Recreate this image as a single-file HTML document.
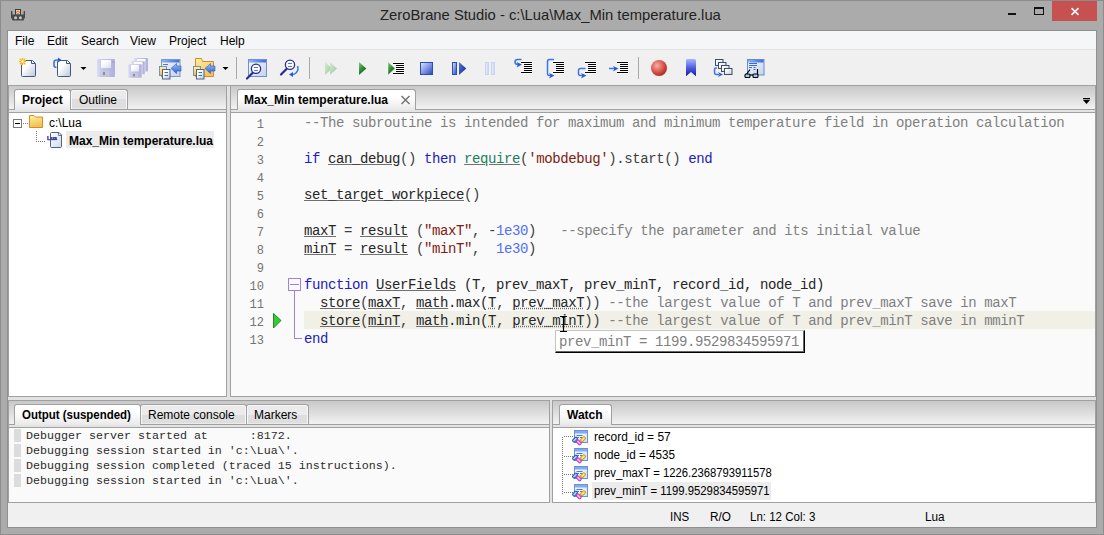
<!DOCTYPE html>
<html><head><meta charset="utf-8">
<style>
*{margin:0;padding:0;box-sizing:border-box}
html,body{width:1104px;height:535px;overflow:hidden;background:#ababab;font-family:"Liberation Sans",sans-serif;font-size:12px;color:#000}
.a{position:absolute}
.t{position:absolute;white-space:pre;line-height:1}
.mono{font-family:"Liberation Mono",monospace}

.ln{position:absolute;left:231px;width:33px;height:18px;line-height:18px;padding-top:3px;text-align:right;font-family:"Liberation Mono",monospace;font-size:12px;color:#747474;white-space:pre}
.code{position:absolute;left:304px;height:18px;line-height:18px;padding-top:1px;font-family:"Liberation Mono",monospace;font-size:14px;letter-spacing:-0.4px;white-space:pre}
.code .u{text-decoration:underline;text-decoration-color:#707070;text-underline-offset:1px}
.code .d{text-decoration:underline dotted;text-decoration-color:#707070;text-underline-offset:1px}
.out{position:absolute;left:26px;height:15px;line-height:15px;font-family:"Liberation Mono",monospace;font-size:11.667px;color:#2c2c2c;white-space:pre}
.tabA{position:absolute;height:21px;border:1px solid #a0a0a0;border-bottom:0;border-radius:3px 3px 0 0;background:linear-gradient(#fff 35%,#e9e9e9)}
.tabI{position:absolute;height:20px;border:1px solid #a0a0a0;border-bottom:0;border-radius:3px 3px 0 0;background:linear-gradient(#ebebeb 50%,#dedede 50%);box-shadow:inset 1px 1px 0 #f8f8f8,inset -1px 0 0 #f8f8f8,inset 0 -1px 0 #eaeaea}
</style></head><body>
<!-- frame lines -->
<div class="a" style="left:0;top:0;width:1104px;height:1px;background:#8c8c8c"></div>
<div class="a" style="left:0;top:0;width:1px;height:535px;background:#8c8c8c"></div>
<div class="a" style="left:1103px;top:0;width:1px;height:535px;background:#8c8c8c"></div>
<div class="a" style="left:0;top:534px;width:1104px;height:1px;background:#8c8c8c"></div>

<!-- title -->
<div class="t" id="title" style="left:380px;top:7px;font-size:15px;color:#222;transform:scaleX(0.985);transform-origin:0 0">ZeroBrane Studio - c:\Lua\Max_Min temperature.lua</div>
<!-- window buttons -->
<div class="a" style="left:1008px;top:13px;width:8px;height:2px;background:#111"></div>
<div class="a" style="left:1034px;top:7px;width:10px;height:8px;border:1px solid #111;border-top-width:2px"></div>
<div class="a" style="left:1052px;top:1px;width:45px;height:20px;background:#c75050"></div>

<svg class="a" style="left:1052px;top:1px" width="45" height="20" viewBox="1052 1 45 20">
<path d="M1071.5 8.2L1078.5 14.8M1078.5 8.2L1071.5 14.8" stroke="#fff" stroke-width="1.6"/>
</svg>
<!-- app icon -->
<svg class="a" style="left:8px;top:6px" width="20" height="17" viewBox="8 6 20 17">
<rect x="15.5" y="9.5" width="5" height="5.5" fill="#d8d8d8" stroke="#3c3c3c"/>
<circle cx="18" cy="12.2" r="1.7" fill="#e87830"/>
<rect x="17" y="11.8" width="2" height="0.9" fill="#f4d0b0"/>
<rect x="11" y="11" width="1.3" height="7" fill="#444"/>
<rect x="23.7" y="11" width="1.3" height="7" fill="#444"/>
<path d="M12 14.5H24L25 17L23.5 20.5H12.5L11 17Z" fill="#4a4a4a"/>
<circle cx="15.6" cy="17.8" r="1.5" fill="#c8c8c8"/>
<circle cx="20.4" cy="17.8" r="1.5" fill="#c8c8c8"/>
</svg>

<!-- client -->
<div class="a" style="left:7px;top:30px;width:1090px;height:498px;background:#8f8f8f"></div>
<div class="a" style="left:8px;top:31px;width:1088px;height:496px;background:#f0f0f0"></div>
<!-- menu bar -->
<div class="a" style="left:8px;top:31px;width:1088px;height:18px;background:#f5f6f7"></div>
<div class="a" style="left:8px;top:49px;width:1088px;height:1px;background:#e3e3e3"></div>
<div class="t" style="left:15px;top:35px">File</div>
<div class="t" style="left:47px;top:35px">Edit</div>
<div class="t" style="left:81px;top:35px">Search</div>
<div class="t" style="left:130px;top:35px">View</div>
<div class="t" style="left:169px;top:35px">Project</div>
<div class="t" style="left:220px;top:35px">Help</div>



<!-- TOOLBAR ICONS -->
<svg class="a" style="left:0;top:50px" width="800" height="35" viewBox="0 50 800 35">
<defs>
<linearGradient id="pg" x1="0" y1="0" x2="1" y2="1"><stop offset="0.35" stop-color="#ffffff"/><stop offset="1" stop-color="#b8c6dc"/></linearGradient>
<linearGradient id="flp" x1="0" y1="0" x2="1" y2="0"><stop offset="0" stop-color="#dcdcf8"/><stop offset="0.3" stop-color="#c4c4ee"/><stop offset="1" stop-color="#b0b0e0"/></linearGradient>
<linearGradient id="lbl" x1="0" y1="0" x2="1" y2="1"><stop offset="0.3" stop-color="#ffffff"/><stop offset="1" stop-color="#dcdcf0"/></linearGradient>
<linearGradient id="win" x1="0" y1="0" x2="1" y2="1"><stop offset="0" stop-color="#f4f8ff"/><stop offset="1" stop-color="#c4d2ea"/></linearGradient>
<linearGradient id="tbar" x1="0" y1="0" x2="1" y2="0"><stop offset="0" stop-color="#90b4f0"/><stop offset="1" stop-color="#3a6ed8"/></linearGradient>
<linearGradient id="fdr" x1="0" y1="0" x2="0.4" y2="1"><stop offset="0" stop-color="#fff0a0"/><stop offset="1" stop-color="#f4c460"/></linearGradient>
<linearGradient id="ydoc" x1="0" y1="0" x2="0" y2="1"><stop offset="0" stop-color="#fff4b0"/><stop offset="1" stop-color="#f0b840"/></linearGradient>
<linearGradient id="arr" x1="0" y1="0" x2="0" y2="1"><stop offset="0" stop-color="#9cc4ff"/><stop offset="1" stop-color="#2a5cd0"/></linearGradient>
<linearGradient id="grn" x1="0" y1="0" x2="0.6" y2="1"><stop offset="0" stop-color="#7ccc7c"/><stop offset="0.5" stop-color="#3a963a"/><stop offset="1" stop-color="#0a540a"/></linearGradient>
<linearGradient id="pgrn" x1="0" y1="0" x2="1" y2="1"><stop offset="0" stop-color="#d4ecd4"/><stop offset="1" stop-color="#98c898"/></linearGradient>
<linearGradient id="blu" x1="0" y1="0" x2="1" y2="1"><stop offset="0" stop-color="#e0e8ff"/><stop offset="1" stop-color="#2848c0"/></linearGradient>
<linearGradient id="dblu" x1="0" y1="0" x2="1" y2="1"><stop offset="0" stop-color="#5878d8"/><stop offset="1" stop-color="#0c2890"/></linearGradient>
<linearGradient id="pblu" x1="0" y1="0" x2="1" y2="0"><stop offset="0" stop-color="#f0f4ff"/><stop offset="1" stop-color="#c0d0f4"/></linearGradient>
<radialGradient id="red" cx="0.38" cy="0.35" r="0.7"><stop offset="0" stop-color="#f4b0a8"/><stop offset="0.55" stop-color="#dc5a50"/><stop offset="1" stop-color="#a82420"/></radialGradient>
<linearGradient id="bm" x1="0" y1="0" x2="0" y2="1"><stop offset="0" stop-color="#a8b8ff"/><stop offset="0.5" stop-color="#5060e0"/><stop offset="1" stop-color="#1818a8"/></linearGradient>
<linearGradient id="sq" x1="0" y1="0" x2="1" y2="1"><stop offset="0.2" stop-color="#ffffff"/><stop offset="1" stop-color="#c0cce4"/></linearGradient>
</defs>

<!-- new -->
<path d="M21.5 61.5Q21.5 60.5 22.5 60.5H32.5L35.5 63.5V75.5Q35.5 76.5 34.5 76.5H22.5Q21.5 76.5 21.5 75.5Z" fill="url(#pg)" stroke="#45587a"/>
<path d="M31.5 60.5V63.5H35" fill="none" stroke="#45587a"/>
<rect x="19" y="58" width="7" height="7" fill="#f8e8a0" opacity="0.7"/>
<path d="M22.5 58V65M19 61.5H26M20 59L25 64M25 59L20 64" stroke="#e8b820" stroke-width="1.1"/>
<circle cx="22.5" cy="61.5" r="1.2" fill="#fff8d0"/>

<!-- open -->
<path d="M57.5 61.5Q57.5 60.5 58.5 60.5H67.5L70.5 63.5V75.5Q70.5 76.5 69.5 76.5H58.5Q57.5 76.5 57.5 75.5Z" fill="url(#pg)" stroke="#45587a"/>
<path d="M66.5 60.5V63.5H70" fill="none" stroke="#45587a"/>
<path d="M60 60H56.5Q54 60 54 62.5V65Q54 67.5 56.5 67.5" fill="none" stroke="#3a78e0" stroke-width="1.6"/>
<path d="M58 57.5L61.5 60L58 62.5Z" fill="#2a5cc8"/>

<!-- dropdown -->
<path d="M80.5 67H86.5L83.5 70Z" fill="#000"/>

<!-- save disabled -->
<rect x="97" y="59" width="18" height="18" rx="1" fill="url(#flp)"/>
<rect x="101" y="60" width="10" height="8" fill="url(#lbl)"/>
<rect x="102" y="71" width="7" height="5.5" fill="#c8c8d0"/>
<rect x="103" y="72" width="2" height="3" fill="#909098"/>
<rect x="112.5" y="61" width="1" height="2" fill="#9898c8"/>

<!-- save all disabled -->
<rect x="134" y="58" width="14" height="13.5" rx="1" fill="url(#flp)"/>
<rect x="137" y="59" width="8.5" height="2.5" fill="#fff"/>
<rect x="131" y="61" width="14" height="13.5" rx="1" fill="url(#flp)" stroke="#f0f0f0" stroke-width="0.6"/>
<rect x="134" y="62" width="8.5" height="2.5" fill="#fff"/>
<rect x="128" y="64" width="14" height="14" rx="1" fill="url(#flp)" stroke="#f0f0f0" stroke-width="0.6"/>
<rect x="131" y="65" width="8" height="6.5" fill="url(#lbl)"/>
<rect x="132" y="73.5" width="6" height="4" fill="#c8c8d0"/>
<rect x="133" y="74" width="2" height="2.5" fill="#909098"/>

<!-- window + arrow -->
<rect x="161.5" y="59.5" width="18.5" height="17" fill="url(#win)" stroke="#7a98cc"/>
<rect x="162" y="60" width="17.5" height="2.5" fill="url(#tbar)"/>
<path d="M163 64.5H168" stroke="#4a7ad8"/>
<path d="M171 68.5L176.5 63.5V66H181V71H176.5V73.5Z" fill="url(#arr)" stroke="#2a58c0" stroke-width="0.6"/>
<rect x="159.5" y="66.5" width="7" height="9" fill="url(#ydoc)" stroke="#6080a8" stroke-width="0.8"/>
<rect x="162.5" y="69.5" width="7.5" height="9.5" fill="url(#pg)" stroke="#50648a"/>
<path d="M164.5 72.5H168M164.5 75.5H168" stroke="#3a6ad8"/>

<!-- folder + arrow -->
<path d="M195.5 76.5V58.5H201.5L202.5 61.5H213.5V76.5Z" fill="url(#fdr)" stroke="#d08a30"/>
<path d="M205 68.5L210.5 63.5V66H215V71H210.5V73.5Z" fill="url(#arr)" stroke="#2a58c0" stroke-width="0.6"/>
<rect x="193.5" y="66.5" width="7" height="9" fill="url(#ydoc)" stroke="#6080a8" stroke-width="0.8"/>
<rect x="196.5" y="69.5" width="7.5" height="9.5" fill="url(#pg)" stroke="#50648a"/>
<path d="M198.5 72.5H202M198.5 75.5H202" stroke="#3a6ad8"/>

<!-- dropdown 2 -->
<path d="M222.5 67H228.5L225.5 70Z" fill="#000"/>

<!-- separators -->
<rect x="236" y="57" width="1" height="22" fill="#a8a8a8"/>
<rect x="309" y="57" width="1" height="22" fill="#a8a8a8"/>
<rect x="638" y="57" width="1" height="22" fill="#a8a8a8"/>

<!-- find in window -->
<rect x="248.5" y="59.5" width="18" height="17" fill="url(#win)" stroke="#7090d0"/>
<rect x="249" y="60" width="17" height="2.5" fill="url(#tbar)"/>
<path d="M252.5 73L247 78.5" stroke="#2a2a90" stroke-width="2.2" stroke-linecap="round"/>
<circle cx="256" cy="68.8" r="4.6" fill="#fff" stroke="#2a2a98" stroke-width="1.3"/>
<path d="M254 67.5H258M254 70.5H258" stroke="#4a7ad8"/>

<!-- find replace -->
<path d="M286.5 69L281 74.5" stroke="#2a2a90" stroke-width="2.2" stroke-linecap="round"/>
<circle cx="290" cy="64.8" r="4.6" fill="#fff" stroke="#2a2a98" stroke-width="1.3"/>
<path d="M288 63.5H292M288 66.5H292" stroke="#4a7ad8"/>
<path d="M297.5 66Q299 70 296 73Q294.5 74.5 292 74.5" fill="none" stroke="#3a78e0" stroke-width="1.5"/>
<path d="M289 74.5L293 72V77Z" fill="#2a5cc8"/>

<!-- run (disabled) -->
<path d="M325 62L332 68.5L325 75Z" fill="url(#pgrn)"/>
<path d="M330 62L337 68.5L330 75Z" fill="url(#pgrn)"/>
<!-- play -->
<path d="M359 62L366.3 68.5L359 75Z" fill="url(#grn)"/>
<!-- run to cursor -->
<g transform="translate(0 1)"><path d="M393 62.5H404M396 64.5H404M396 66.5H404M396 68.5H404M396 70.5H404M393 72.5H404" stroke="#fff" stroke-width="3" opacity="0.9"/><path d="M393 62.5H404M396 64.5H404M396 66.5H404M396 68.5H404M396 70.5H404M393 72.5H404" stroke="#000" stroke-width="1.1"/></g>
<path d="M388 61.8L395 68.4L388 75Z" fill="url(#grn)" stroke="#fff" stroke-width="0.4"/>

<!-- stop -->
<rect x="420.5" y="62.5" width="12" height="12" fill="url(#blu)" stroke="#2a4cc0"/>
<!-- step -->
<rect x="452.5" y="62.5" width="4" height="12" fill="url(#blu)" stroke="#2a4cc0"/>
<path d="M459 62L466.3 68.5L459 75Z" fill="url(#dblu)"/>
<!-- pause disabled -->
<rect x="485.5" y="62.5" width="3" height="12" fill="url(#pblu)" stroke="#c8d4f0"/>
<rect x="491.5" y="62.5" width="3" height="12" fill="url(#pblu)" stroke="#c8d4f0"/>

<!-- step into -->
<path d="M521 62.5H532M524 64.5H532M524 66.5H532M524 68.5H532M524 70.5H532M521 72.5H532" stroke="#fff" stroke-width="3" opacity="0.9"/><path d="M521 62.5H532M524 64.5H532M524 66.5H532M524 68.5H532M524 70.5H532M521 72.5H532" stroke="#000" stroke-width="1.1"/>
<path d="M521.5 59.5H517.5Q515 59.5 515 62Q515 64.5 518 64.5H519" fill="none" stroke="#3a78e0" stroke-width="1.5"/>
<path d="M516.5 62L522 64.5L516.5 67.5L518 64.5Z" fill="#2a5cc8"/>

<!-- step over -->
<path d="M553 62.5H564M556 64.5H564M556 66.5H564M556 68.5H564M556 70.5H564M553 72.5H564" stroke="#fff" stroke-width="3" opacity="0.9"/><path d="M553 62.5H564M556 64.5H564M556 66.5H564M556 68.5H564M556 70.5H564M553 72.5H564" stroke="#000" stroke-width="1.1"/>
<path d="M554 59.5H549.5Q547.5 59.5 547.5 61.5V73.5Q547.5 75.5 549.5 75.5H551" fill="none" stroke="#3a78e0" stroke-width="1.5"/>
<path d="M549 73L554.5 75.5L549 78.5L550.5 75.5Z" fill="#2a5cc8"/>

<!-- step out -->
<path d="M585 62.5H596M588 64.5H596M588 66.5H596M588 68.5H596M588 70.5H596M585 72.5H596" stroke="#fff" stroke-width="3" opacity="0.9"/><path d="M585 62.5H596M588 64.5H596M588 66.5H596M588 68.5H596M588 70.5H596M585 72.5H596" stroke="#000" stroke-width="1.1"/>
<path d="M585.5 68.5H580.5Q578.5 68.5 578.5 70.5V73.5Q578.5 75.5 580.5 75.5H583" fill="none" stroke="#3a78e0" stroke-width="1.5"/>
<path d="M581 73L586.5 75.5L581 78.5L582.5 75.5Z" fill="#2a5cc8"/>

<!-- run step -->
<path d="M617 62.5H628M620 64.5H628M620 66.5H628M620 68.5H628M620 70.5H628M617 72.5H628" stroke="#fff" stroke-width="3" opacity="0.9"/><path d="M617 62.5H628M620 64.5H628M620 66.5H628M620 68.5H628M620 70.5H628M617 72.5H628" stroke="#000" stroke-width="1.1"/>
<path d="M609 68.5H615" stroke="#3a78e0" stroke-width="1.5"/>
<path d="M613 66L618.5 68.5L613 71.5L614.5 68.5Z" fill="#2a5cc8"/>

<!-- breakpoint -->
<circle cx="659" cy="68" r="8" fill="url(#red)"/>
<!-- bookmark -->
<path d="M686 60.5Q686 59 687.5 59H694.5Q696 59 696 60.5V76.2L691 72L686 76.2Z" fill="url(#bm)"/>

<!-- stack -->
<g stroke="#3a4660" stroke-width="0.95" fill="url(#sq)">
<rect x="715.5" y="59.5" width="7.5" height="6"/>
<rect x="718.5" y="62.5" width="7.5" height="6"/>
<rect x="721.5" y="65.5" width="7.5" height="6"/>
<rect x="724.5" y="68.5" width="7.5" height="6"/>
</g>
<path d="M717 68H716Q714.5 68 714.5 69.5V72.5Q714.5 74.5 716.5 74.5H719" fill="none" stroke="#3a78e0" stroke-width="1.5"/>
<path d="M718 72L723 74.5L718 77L719.5 74.5Z" fill="#2a5cc8"/>

<!-- watch window -->
<rect x="747.5" y="59.5" width="16.5" height="15.5" fill="url(#win)" stroke="#6a8ad0"/>
<rect x="748" y="60" width="15.5" height="2.5" fill="url(#tbar)"/>
<path d="M749 63.5H757M749 65.5H757M749 67.5H752M753.5 67.5H755.5M753.5 69.5H755.5" stroke="#3a6ad8"/>
<path d="M746 75L750 69.5M757.5 75V69" stroke="#000" stroke-width="1.2"/>
<rect x="745" y="74" width="5" height="3.5" rx="1" fill="#9ccaff" stroke="#000" stroke-width="1.1"/>
<rect x="753" y="74" width="5" height="3.5" rx="1" fill="#9ccaff" stroke="#000" stroke-width="1.1"/>
<path d="M750 75H753" stroke="#000" stroke-width="1"/>
</svg>



<!-- toolbar bottom / panels top line -->
<div class="a" style="left:8px;top:85px;width:1088px;height:1px;background:#a0a0a0"></div>

<!-- LEFT NOTEBOOK -->
<div class="a" style="left:8px;top:86px;width:219px;height:311px;background:#a0a0a0"></div>
<div class="a" style="left:9px;top:86px;width:217px;height:23px;background:linear-gradient(#c8c8c8,#f2f2f2)"></div>
<div class="a" style="left:9px;top:110px;width:217px;height:2px;background:#e4e4e4"></div>
<div class="a" style="left:9px;top:113px;width:217px;height:283px;background:#fff"></div>
<!-- inactive tab Outline -->
<div class="tabI" style="left:70px;top:89px;width:58px"></div>
<div class="t" style="left:79px;top:94px">Outline</div>
<!-- active tab Project -->
<div class="tabA" style="left:14px;top:89px;width:57px"></div>
<div class="t" style="left:22px;top:94px;font-weight:bold">Project</div>


<!-- PROJECT TREE -->
<svg class="a" style="left:8px;top:112px" width="60" height="40" viewBox="8 112 60 40">
<defs>
<linearGradient id="fold" x1="0" y1="0" x2="0.3" y2="1"><stop offset="0" stop-color="#fff3a8"/><stop offset="1" stop-color="#f2c050"/></linearGradient>
<linearGradient id="page" x1="0" y1="0" x2="1" y2="1"><stop offset="0" stop-color="#ffffff"/><stop offset="1" stop-color="#cfdaea"/></linearGradient>
</defs>
<rect x="13.5" y="119.5" width="8" height="8" fill="#fff" stroke="#7a7a7a"/>
<line x1="15" y1="123.5" x2="20" y2="123.5" stroke="#000"/>
<path d="M23 123.5h1M25 123.5h1M27 123.5h1" stroke="#777"/>
<path d="M29.5 127.5V115.5H34l1.5 1.5H42.5V127.5Z" fill="url(#fold)" stroke="#d88a28"/>
<path d="M36.5 131v1M36.5 133v1M36.5 135v1M36.5 137v1M36.5 139v1M36.5 141v1M38 141.5h1M40 141.5h1M42 141.5h1M44 141.5h1" stroke="#777"/>
<path d="M50.5 146.5V133.5Q50.5 132.5 51.5 132.5H59l2.5 2.5V146.5Q61.5 147.5 60.5 147.5H51.5Q50.5 147.5 50.5 146.5Z" fill="url(#page)" stroke="#52607a"/><path d="M58.5 132.5V135.5H61.5" fill="none" stroke="#52607a" stroke-width="0.8"/>
<text x="47" y="139.5" font-family="Liberation Sans" font-size="5" font-weight="bold" fill="#1c1c98" stroke="#1c1c98" stroke-width="0.25" textLength="10" lengthAdjust="spacingAndGlyphs">Lua</text>
</svg>
<div class="t" style="left:49px;top:117px">c:\Lua</div>
<div class="a" style="left:66px;top:131px;width:148px;height:17px;background:#ececec"></div>
<div class="t" style="left:69px;top:135px;font-weight:bold">Max_Min temperature.lua</div>

<!-- sash -->
<div class="a" style="left:227px;top:86px;width:3px;height:311px;background:#e2e2e2"></div>

<!-- EDITOR NOTEBOOK -->
<div class="a" style="left:230px;top:86px;width:866px;height:311px;background:#a0a0a0"></div>
<div class="a" style="left:231px;top:86px;width:864px;height:23px;background:linear-gradient(#c8c8c8,#f2f2f2)"></div>
<div class="a" style="left:231px;top:110px;width:864px;height:2px;background:#e4e4e4"></div>
<div class="a" style="left:231px;top:113px;width:864px;height:283px;background:#fafafa"></div>
<div class="tabA" style="left:237px;top:89px;width:179px"></div>
<div class="t" style="left:244px;top:94px;font-weight:bold">Max_Min temperature.lua</div>

<div class="a" style="left:304px;top:311px;width:791px;height:18px;background:#f0f0e6"></div>
<div class="ln" style="top:113px">1</div>
<div class="code" style="top:113px"><span style="color:#808080">--The subroutine is intended for maximum and minimum temperature field in operation calculation</span></div>
<div class="ln" style="top:131px">2</div>
<div class="ln" style="top:149px">3</div>
<div class="code" style="top:149px"><span style="color:#2020c0">if</span><span style="color:#404040"> </span><span style="color:#262626" class="u">can_debug</span><span style="color:#404040">() </span><span style="color:#2020c0">then</span><span style="color:#404040"> </span><span style="color:#207f60" class="u">require</span><span style="color:#404040">(</span><span style="color:#802010">&#x27;mobdebug&#x27;</span><span style="color:#404040">).start() </span><span style="color:#2020c0">end</span></div>
<div class="ln" style="top:167px">4</div>
<div class="ln" style="top:185px">5</div>
<div class="code" style="top:185px"><span style="color:#262626" class="u">set_target_workpiece</span><span style="color:#404040">()</span></div>
<div class="ln" style="top:203px">6</div>
<div class="ln" style="top:221px">7</div>
<div class="code" style="top:221px"><span style="color:#262626" class="u">maxT</span><span style="color:#404040"> = </span><span style="color:#262626" class="u">result</span><span style="color:#404040"> (</span><span style="color:#802010">&quot;maxT&quot;</span><span style="color:#404040">, -</span><span style="color:#5070ff">1e30</span><span style="color:#404040">)   </span><span style="color:#808080">--specify the parameter and its initial value</span></div>
<div class="ln" style="top:239px">8</div>
<div class="code" style="top:239px"><span style="color:#262626" class="u">minT</span><span style="color:#404040"> = </span><span style="color:#262626" class="u">result</span><span style="color:#404040"> (</span><span style="color:#802010">&quot;minT&quot;</span><span style="color:#404040">,  </span><span style="color:#5070ff">1e30</span><span style="color:#404040">)</span></div>
<div class="ln" style="top:257px">9</div>
<div class="ln" style="top:275px">10</div>
<div class="code" style="top:275px"><span style="color:#2020c0">function</span><span style="color:#404040"> </span><span style="color:#262626" class="u">UserFields</span><span style="color:#262626"> (T, prev_maxT, prev_minT, record_id, node_id)</span></div>
<div class="ln" style="top:293px">11</div>
<div class="code" style="top:293px"><span style="color:#404040">  </span><span style="color:#262626" class="u">store</span><span style="color:#404040">(</span><span style="color:#262626" class="u">maxT</span><span style="color:#404040">, </span><span style="color:#262626" class="u">math</span><span style="color:#262626">.max(</span><span style="color:#262626" class="d">T</span><span style="color:#404040">, </span><span style="color:#262626" class="d">prev_maxT</span><span style="color:#404040">)) </span><span style="color:#808080">--the largest value of T and prev_maxT save in maxT</span></div>
<div class="ln" style="top:311px">12</div>
<div class="code" style="top:311px"><span style="color:#404040">  </span><span style="color:#262626" class="u">store</span><span style="color:#404040">(</span><span style="color:#262626" class="u">minT</span><span style="color:#404040">, </span><span style="color:#262626" class="u">math</span><span style="color:#262626">.min(</span><span style="color:#262626" class="d">T</span><span style="color:#404040">, </span><span style="color:#262626" class="d">prev_minT</span><span style="color:#404040">)) </span><span style="color:#808080">--the largest value of T and prev_minT save in mminT</span></div>
<div class="ln" style="top:329px">13</div>
<div class="code" style="top:329px"><span style="color:#2020c0">end</span></div>

<!-- fold marker -->
<svg class="a" style="left:270px;top:270px" width="40" height="80" viewBox="270 270 40 80">
<rect x="288.5" y="278.5" width="12" height="12" fill="#fafafa" stroke="#a080e0"/>
<line x1="290" y1="284.5" x2="299" y2="284.5" stroke="#a080e0"/>
<line x1="294.5" y1="291" x2="294.5" y2="338.5" stroke="#a080e0"/>
<line x1="294" y1="338.5" x2="302" y2="338.5" stroke="#a080e0"/>
<path d="M273.5 313.5 L281 320.5 L273.5 328 Z" fill="#3ac83a" stroke="#1f8a1f" stroke-width="1"/>
</svg>
<!-- tooltip -->
<div class="a" style="left:555px;top:330px;width:250px;height:23px;background:#fff;border-top:1px solid #c4c4c4;border-left:1px solid #c4c4c4;border-right:1px solid #000;border-bottom:1px solid #000;box-shadow:inset -1px -1px 0 #666"></div>
<div class="code" style="left:559px;top:332px;color:#808080">prev_minT = 1199.9529834595971</div>
<!-- I-beam cursor -->
<svg class="a" style="left:558px;top:313px" width="12" height="22" viewBox="0 0 12 22">
<path d="M2 3.5H9M5.5 4V18M2 18.5H9" stroke="#000" stroke-width="1.2"/>
</svg>
<!-- editor tab close -->
<svg class="a" style="left:400px;top:95px" width="12" height="10" viewBox="0 0 12 10">
<path d="M1.5 1L9.5 9M9.5 1L1.5 9" stroke="#707070" stroke-width="1.4"/>
</svg>

<!-- editor dropdown -->
<svg class="a" style="left:1080px;top:95px" width="14" height="12" viewBox="1080 95 14 12">
<rect x="1083" y="98" width="7" height="1.3" fill="#000"/>
<path d="M1083 100H1090L1086.5 104Z" fill="#000"/>
</svg>
<!-- horizontal sash -->
<div class="a" style="left:8px;top:397px;width:1088px;height:3px;background:#e2e2e2"></div>

<!-- OUTPUT NOTEBOOK -->
<div class="a" style="left:8px;top:400px;width:542px;height:103px;background:#a0a0a0"></div>
<div class="a" style="left:9px;top:401px;width:540px;height:23px;background:linear-gradient(#c8c8c8,#f2f2f2)"></div>
<div class="a" style="left:9px;top:425px;width:540px;height:2px;background:#e4e4e4"></div>
<div class="a" style="left:9px;top:428px;width:540px;height:74px;background:#fafafa"></div>
<div class="tabI" style="left:140px;top:404px;width:107px"></div>
<div class="t" style="left:148px;top:409px">Remote console</div>
<div class="tabI" style="left:246px;top:404px;width:63px"></div>
<div class="t" style="left:254px;top:409px">Markers</div>
<div class="tabA" style="left:14px;top:404px;width:127px"></div>
<div class="t" style="left:22px;top:409px;font-weight:bold;transform:scaleX(0.955);transform-origin:0 0">Output (suspended)</div>


<!-- OUTPUT TEXT -->
<div class="a" style="left:14px;top:429px;width:7px;height:13px;background:#dcdcdc"></div>
<div class="a" style="left:14px;top:444px;width:7px;height:13px;background:#dcdcdc"></div>
<div class="a" style="left:14px;top:459px;width:7px;height:13px;background:#dcdcdc"></div>
<div class="a" style="left:14px;top:474px;width:7px;height:13px;background:#dcdcdc"></div>
<div class="out" style="top:429px">Debugger server started at      :8172.</div>
<div class="out" style="top:444px">Debugging session started in 'c:\Lua\'.</div>
<div class="out" style="top:459px">Debugging session completed (traced 15 instructions).</div>
<div class="out" style="top:474px">Debugging session started in 'c:\Lua\'.</div>

<!-- sash -->
<div class="a" style="left:550px;top:400px;width:2px;height:103px;background:#e2e2e2"></div>

<!-- WATCH NOTEBOOK -->
<div class="a" style="left:552px;top:400px;width:544px;height:103px;background:#a0a0a0"></div>
<div class="a" style="left:553px;top:401px;width:542px;height:23px;background:linear-gradient(#c8c8c8,#f2f2f2)"></div>
<div class="a" style="left:553px;top:425px;width:542px;height:2px;background:#e4e4e4"></div>
<div class="a" style="left:553px;top:428px;width:542px;height:74px;background:#fff"></div>
<div class="tabA" style="left:559px;top:404px;width:53px"></div>
<div class="t" style="left:567px;top:409px;font-weight:bold">Watch</div>


<!-- WATCH ITEMS -->
<div class="a" style="left:592px;top:482px;width:179px;height:18px;background:#ececec"></div>
<svg class="a" style="left:556px;top:428px" width="40" height="74" viewBox="556 428 40 74">
<defs>
<linearGradient id="wwin" x1="0" y1="0" x2="1" y2="1"><stop offset="0" stop-color="#ffffff"/><stop offset="1" stop-color="#d0def4"/></linearGradient>
<g id="wicon">
<rect x="574.5" y="430.5" width="13" height="12" fill="url(#wwin)" stroke="#6890dc"/>
<rect x="575" y="431" width="12" height="2.5" fill="#80acf0"/>
<path d="M576.5 435.5h6M576.5 437.5h2.5M580 437.5h2.5" stroke="#4a7ad8"/>
<rect x="-1.4" y="-2.6" width="2.8" height="5.2" rx="0.9" transform="translate(575 439.6) rotate(45)" fill="#b8d0ff" stroke="#2050c0" stroke-width="1"/>
<rect x="-1.4" y="-2.6" width="2.8" height="5.2" rx="0.9" transform="translate(578.8 442.4) rotate(-45)" fill="#f4b8ec" stroke="#c030c0" stroke-width="1"/>
<rect x="-1.4" y="-2.6" width="2.8" height="5.2" rx="0.9" transform="translate(583 439.2) rotate(45)" fill="#ffe890" stroke="#d09800" stroke-width="1"/>
</g>
</defs>
<use href="#wicon"/>
<use href="#wicon" y="18"/>
<use href="#wicon" y="36"/>
<use href="#wicon" y="54"/>
<path d="M562.5 437v1M562.5 439v1M562.5 441v1M562.5 443v1M562.5 445v1M562.5 447v1M562.5 449v1M562.5 451v1M562.5 453v1M562.5 455v1M562.5 457v1M562.5 459v1M562.5 461v1M562.5 463v1M562.5 465v1M562.5 467v1M562.5 469v1M562.5 471v1M562.5 473v1M562.5 475v1M562.5 477v1M562.5 479v1M562.5 481v1M562.5 483v1M562.5 485v1M562.5 487v1M562.5 489v1M562.5 491v1M562.5 493v1" stroke="#777"/>
<path d="M564 436.5h1M566 436.5h1M568 436.5h1M570 436.5h1M572 436.5h1M564 456.5h1M566 456.5h1M568 456.5h1M570 456.5h1M572 456.5h1M564 474.5h1M566 474.5h1M568 474.5h1M570 474.5h1M572 474.5h1M564 492.5h1M566 492.5h1M568 492.5h1M570 492.5h1M572 492.5h1" stroke="#777"/>
</svg>
<div class="t" style="left:594px;top:431px;transform:scaleX(0.995);transform-origin:0 0">record_id = 57</div>
<div class="t" style="left:594px;top:449px;transform:scaleX(0.975);transform-origin:0 0">node_id = 4535</div>
<div class="t" style="left:594px;top:467px;transform:scaleX(0.939);transform-origin:0 0">prev_maxT = 1226.2368793911578</div>
<div class="t" style="left:594px;top:485px;transform:scaleX(0.944);transform-origin:0 0">prev_minT = 1199.9529834595971</div>

<!-- STATUS BAR -->
<div class="a" style="left:8px;top:503px;width:1088px;height:24px;background:#f0f0f0"></div>
<div class="t" style="left:670px;top:511px;transform:scaleX(0.96);transform-origin:0 0">INS</div>
<div class="t" style="left:710px;top:511px;transform:scaleX(0.98);transform-origin:0 0">R/O</div>
<div class="t" style="left:750px;top:511px;transform:scaleX(0.96);transform-origin:0 0">Ln: 12 Col: 3</div>
<div class="t" style="left:925px;top:511px;transform:scaleX(0.98);transform-origin:0 0">Lua</div>

</body></html>
